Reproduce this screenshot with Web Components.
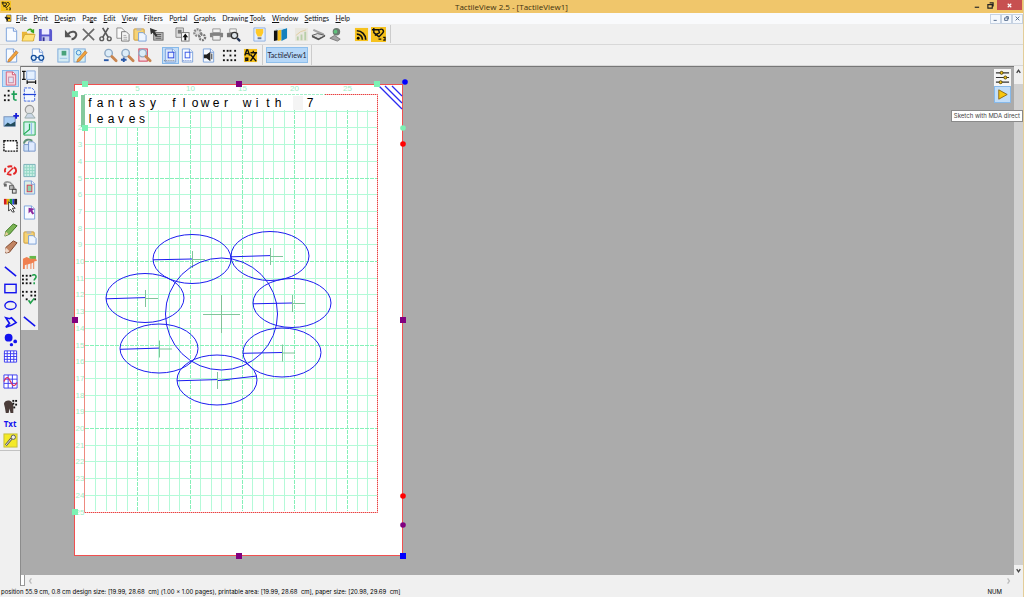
<!DOCTYPE html>
<html lang="en">
<head>
<meta charset="utf-8">
<title>TactileView 2.5 - [TactileView1]</title>
<style>
html, body { height: 100%; margin: 0; }
body { font: 7px/11px Lato, "Open Sans", sans-serif; color: #111; background: #f0f0f0; overflow: hidden; }
</style>
</head>
<body>
<tv-app></tv-app>
<script>
const page = (x = '', c = '#f8fbff') => `<path d="M2.500 1h7.500l3.500 3v11h-11z" fill="${c}" stroke="#7ba2dc"/><path d="M10 1v3.500h3.500" fill="#fff" stroke="#6f96d6"/>${x}`;
const dots = (list, s = 2, c = '#111') => list.map(([x, y]) => `<rect x="${x}" y="${y}" width="${s}" height="${s}" fill="${c}"/>`).join('');
const lens = x => `<circle cx="6" cy="5.500" r="4" fill="#dcecf8" stroke="#8fa9c4" stroke-width="1.500"/><path d="M9.500 9l4.500 4.500" stroke="#c9854f" stroke-width="3" stroke-linecap="round"/>${x}`;
const pencil = '<path d="M5 12l8-9 2 2-8 9-3 1z" fill="#f0a33c" stroke="#b8702a" stroke-width=".7"/>';
const ICONS = {
  app: '<rect width="16" height="16" fill="#f6c21d"/><path d="M1 3h7l1 3-5 3M9 3c3-2 6 1 3 4l-4 4M3 1v5l5 4" fill="none" stroke="#111" stroke-width="1.500"/><path d="M8 13h3m2-2h2v3h-2" stroke="#111" stroke-width="1.300" fill="none"/>',
  mdi: '<path d="M5 1h9v13H5z" fill="#f6c21d" stroke="#333"/><path d="M1 5l5-1 3 4-4 3zM6 6h6v3H8v4H6" fill="#222"/>',
  file: page(),
  open: '<path d="M1 5h5l1 2h7v8H1z" fill="#e9b63a"/><path d="M1 15l3-7h11l-2 7z" fill="#ffe27a" stroke="#c99a26" stroke-width=".7"/><path d="M6 5c1-4 5-4 6-2l2-1v5l-4-2 1-1c-1-1-3-1-5 1z" fill="#3aa51f"/>',
  save: '<path d="M1 2h13l1 2v11H1z" fill="#5a58cf"/><rect x="4" y="2" width="8" height="6" fill="#eef"/><rect x="4" y="10" width="8" height="5" fill="#c9cdf0"/><rect x="5" y="11" width="2" height="4" fill="#33318c"/>',
  undo: '<path d="M4 8c4-5 10-3 9 1-1 3-3 4-5 4" fill="none" stroke="#555" stroke-width="2.200"/><path d="M1 3v8h7z" fill="#555"/>',
  del: '<path d="M2 2l12 12M14 2L2 14" stroke="#6a6a6a" stroke-width="1.700"/>',
  cut: '<path d="M5 1l6 10M11 1L5 11" stroke="#5a5a5a" stroke-width="1.800"/><circle cx="4" cy="12.500" r="2" fill="none" stroke="#5a5a5a" stroke-width="1.500"/><circle cx="12" cy="12.500" r="2" fill="none" stroke="#5a5a5a" stroke-width="1.500"/>',
  copy: '<path d="M2 1h5l3 3v8H2z" fill="#fafafa" stroke="#8a8a8a"/><path d="M7 5h5l3 3v7H7z" fill="#f4f4f4" stroke="#777"/><path d="M9 9h3m-3 2h4m-4 2h4" stroke="#aaa"/>',
  paste: '<rect x="2" y="2" width="11" height="12" rx="1" fill="#f6d375" stroke="#c9993a"/><rect x="5" y="1" width="5" height="3" fill="#bbb"/><path d="M7 6h5l3 3v6H7z" fill="#eef5ff" stroke="#7aa0d8"/>',
  select: '<rect x="5" y="6" width="10" height="8" fill="#bbb" stroke="#666"/><path d="M7 8h6m-6 2h6m-6 2h6" stroke="#555"/><path d="M1 1l8 3-3 1 3 4-2 1-3-4-2 2z" fill="#333"/>',
  tocopy: '<path d="M1 1h8v10H1z" fill="#ddd" stroke="#888"/><path d="M3 3h4v4H3z" fill="#777"/><rect x="7" y="6" width="8" height="9" fill="#fff" stroke="#777"/><path d="M11 7l3 4h-2v3h-2v-3H8z" fill="#111"/>',
  gears: '<circle cx="6" cy="6" r="3.500" fill="#ddd" stroke="#888" stroke-width="2.500" stroke-dasharray="2 1"/><circle cx="11" cy="11" r="3" fill="#eee" stroke="#777" stroke-width="2.500" stroke-dasharray="2 1"/>',
  print: '<path d="M4 2h8v4H4z" fill="#f2f2f2" stroke="#999"/><rect x="1" y="6" width="14" height="5" rx="1" fill="#828282"/><path d="M4 9h8v5H4z" fill="#eee" stroke="#888"/>',
  preview: '<path d="M4 2h7v4H4z" fill="#f2f2f2" stroke="#999"/><rect x="1" y="6" width="12" height="5" rx="1" fill="#777"/><circle cx="9" cy="9" r="3.300" fill="#dde4ea" stroke="#333" stroke-width="1.300"/><path d="M12 12l3 3" stroke="#235" stroke-width="2.500"/>',
  bulb: '<path d="M2 1h12v14H2z" fill="#e4eeff" stroke="#8fb0e0"/><path d="M4 2h8v4l-2 4H6L4 6z" fill="#ffc928"/><rect x="6" y="11" width="4" height="2" fill="#6a7890"/>',
  books: '<path d="M1 4l4-2v12l-4 1z" fill="#111"/><path d="M5 4l4-2v12l-4 1z" fill="#f4bd1c"/><path d="M9 3l6-2v11l-6 3z" fill="#1681bd"/><path d="M1 4l5-3h9l-6 2" fill="#dbe9f0"/>',
  chart: '<rect x="1" y="1" width="14" height="14" fill="#e9e7df"/><path d="M3 14v-4h2v4m2 0V8h2v6m2 0V5h2v9" fill="#b9cfa8"/><path d="M2 9l5-4 6-2" stroke="#e0cda0" fill="none"/>',
  scan: '<path d="M3 2l11 5-1 2L2 4z" fill="#a5a5a5"/><path d="M1 9l6-2 8 2-7 4z" fill="#ddd" stroke="#555"/><path d="M1 11l7 3 7-4v-1l-7 3-7-3z" fill="#555"/>',
  camera: '<circle cx="9" cy="5" r="4" fill="#6b7a70"/><circle cx="8" cy="5" r="2" fill="#5fc27b"/><path d="M2 12l5-3 6 4-3 2z" fill="#a5a5a5" stroke="#777"/>',
  rss: '<rect x="1" y="1" width="14" height="14" fill="#f6c21d"/><circle cx="4.500" cy="12" r="1.500"/><path d="M3 7.500a6 6 0 0 1 6 6M3 4a9.500 9.500 0 0 1 9.500 9.500" fill="none" stroke="#111" stroke-width="1.800"/>',
  edit: page() + pencil,
  glasses: page() + '<circle cx="4" cy="10.500" r="2.600" fill="#d8ecff" stroke="#174f9c" stroke-width="1.400"/><circle cx="12" cy="10.500" r="2.600" fill="#d8ecff" stroke="#174f9c" stroke-width="1.400"/><path d="M6 10h4" stroke="#174f9c"/>',
  layout: '<rect x="2" y="1" width="12" height="14" fill="#d6ecf4" stroke="#7aa8da"/><rect x="6" y="3" width="5" height="5" fill="#49a37a"/><path d="M4 11h8" stroke="#9bc4e4"/>',
  layoutedit: '<rect x="1" y="1" width="12" height="14" fill="#d6f0f4" stroke="#7aa8da"/><circle cx="6" cy="5" r="2.500" fill="none" stroke="#3a87d0"/>' + pencil,
  zoomout: lens('<path d="M1 13h5" stroke="#2757a8" stroke-width="2"/>'),
  zoomin: lens('<path d="M1 12.500h6M4 10v5" stroke="#2757a8" stroke-width="2"/>'),
  zoompage: '<rect x="2" y="1" width="9" height="13" fill="#f2dce4" stroke="#d23852"/>' + lens(''),
  fit: page('<rect x="5.500" y="4.500" width="6" height="6" fill="#e6eeff" stroke="#2b49e0"/><path d="M1 13.500h12" stroke="#777" stroke-dasharray="1 1"/>', '#dbe8fb'),
  fit2: page('<rect x="5.500" y="4.500" width="5" height="6" fill="none" stroke="#3a59e8"/><path d="M3 13.500h10" stroke="#57c" stroke-dasharray="1 1"/>'),
  sound: page('<path d="M3 7h3l4-3v10l-4-3H3z" fill="#222"/><path d="M11.500 6v6" stroke="#222"/>'),
  braille: dots([[1,2],[1,7],[1,12],[5,2],[8,2],[13,2],[8,7],[13,7],[5,12],[13,12],[9,12]]),
  translate: '<rect x="1" y="1" width="14" height="14" fill="#f6c21d"/><path d="M2 8l2-6h1l2 6M3 6h4M8 5h7M11 3v2m3 0l-6 9m0-7l6 7M3 10v4m0-3h2v2H3" fill="none" stroke="#111" stroke-width="1.500"/>',
  redpage: '<path d="M3.500 1h7l3 3v11h-10z" fill="#f9d9df" stroke="#d9617a"/><path d="M10 1v3h3" fill="#fff" stroke="#c9506e"/><rect x="6" y="6.500" width="5" height="6" fill="#dfe6f7" stroke="#c58ba4"/>',
  dott: dots([[5,2],[1,7],[5,7],[1,12],[5,12]]) + '<path d="M11.500 3v8c0 2 1 2 3 2M9 6.500h6" fill="none" stroke="#1fa05a" stroke-width="1.800"/>',
  image: '<rect x="1" y="4" width="12" height="10" fill="#a8cdf4" stroke="#7791ba"/><path d="M1 14l4-4 3 2 5-3v5z" fill="#234c5c"/><path d="M14 0v6M11 3h6" stroke="#1820d8" stroke-width="2"/>',
  marquee: '<rect x="1" y="3" width="14" height="11" fill="#fff" stroke="#111" stroke-width="1.500" stroke-dasharray="2 1"/>',
  brokencircle: '<ellipse cx="8" cy="8" rx="6" ry="4.500" fill="none" stroke="#e32525" stroke-width="2" stroke-dasharray="5 2"/><path d="M5 11l6-6" stroke="#e32525" stroke-width="1.500"/>',
  phone: '<path d="M1 5c1-4 6-4 9 0l3 5" fill="none" stroke="#999" stroke-width="1.800"/><rect x="1" y="4" width="3" height="3" fill="#666"/><rect x="7" y="6" width="4" height="4" fill="#bbb" stroke="#666"/><rect x="10" y="10" width="4" height="4" fill="#ddd" stroke="#444"/>',
  palette: '<path d="M1 2h3v6H1z" fill="#d21d1d"/><path d="M4 2h3v6H4z" fill="#e6b000"/><path d="M7 2h3v6H7z" fill="#1a9c33"/><path d="M10 2h2v6h-2z" fill="#2440d8"/><path d="M12 2h3v6h-3z" fill="#222"/><path d="M6 5l7 7-3 0 2 4-2 0-2-3-2 2z" fill="#fff" stroke="#333"/>',
  pencilg: '<path d="M3 10l8-8 4 2-8 9-5 2z" fill="#7cb455" stroke="#39731f"/><path d="M3 10l3 3-4 2z" fill="#e9cf9c"/>',
  eraser: '<path d="M3 9l8-7 4 2-8 10-4 1z" fill="#c28563" stroke="#7d452b"/><path d="M3 9l4 4-3 2-2-2z" fill="#efd7c9"/>',
  line: '<path d="M2 3l12 10" stroke="#1313ee" stroke-width="1.700"/>',
  rect: '<rect x="2" y="3.500" width="12" height="9" fill="none" stroke="#1313ee" stroke-width="1.500"/>',
  ellipse: '<ellipse cx="8" cy="8" rx="6" ry="4.200" fill="none" stroke="#1313ee" stroke-width="1.500"/>',
  poly: '<path d="M3 3l4 1 2-1 5 5-5 3-6 2 4-4z" fill="none" stroke="#1313ee" stroke-width="1.700"/>',
  points: '<circle cx="6" cy="6" r="4.200" fill="#1313ee"/><circle cx="13" cy="10" r="2" fill="#1313ee"/><circle cx="9" cy="13.500" r="1.800" fill="#1313ee"/>',
  table: '<path d="M1.500 2h13v12h-13zM1 5h14M1 8h14M1 11h14M4.500 2v12M8 2v12M11.500 2v12" fill="#fff" stroke="#3a3af0"/>',
  graph: '<path d="M1 1h14v14H1zM1 5.500h14M1 10h14M5.500 1v14M10 1v14" fill="#fff" stroke="#3a3af0"/><path d="M1 8c3-7 5-4 7 0s4 7 7 1" fill="none" stroke="#e03060" stroke-width="1.400"/>',
  elephant: '<path d="M1 5c1-4 6-4 8-2l2 3v9H8l-1-5-1 5H3l-1-6z" fill="#4a3c39"/>' + dots([[10,1],[13,1],[10,4],[13,5],[11,8]]),
  knife: '<rect x="1" y="1" width="14" height="14" fill="#f4ea28" stroke="#c5bd3a"/><path d="M3 13l6-7" stroke="#555" stroke-width="2.500"/><path d="M3 13l6-7" stroke="#eee"/><circle cx="11" cy="4.500" r="2.300" fill="#eee" stroke="#555"/>',
  size: '<path d="M5 1h9v9H5z" fill="#e4f0ff" stroke="#86a8dc"/><path d="M2 1v9M0 1.500h4M0 10h4M5 13h10M5.500 11v4M14.500 11v4" stroke="#111" stroke-width="1.300"/>',
  split: '<path d="M2.500 1h8l3 3v11h-11z" fill="#f2f7ff" stroke="#3c63dd" stroke-dasharray="3 1"/><path d="M1 8h14" stroke="#2343d8" stroke-width="1.300"/>',
  head: '<circle cx="8" cy="6" r="4.500" fill="#e2e2e2" stroke="#9b9b9b" stroke-width="1.300"/><path d="M3 15l3-5h4l4 5z" fill="#cbd7e6" stroke="#9aa"/>',
  greenpg: '<path d="M2 1h12v14H2z" fill="#d4f2ef" stroke="#23ab54"/><path d="M2 14l6-5V3" fill="none" stroke="#23ab54" stroke-width="1.300"/><path d="M10 2v12" stroke="#8bb5ee"/>',
  swap: '<path d="M2 7h6v7H2z" fill="#cde0f8" stroke="#7594c8"/><path d="M7 4h5l2 2v8H7z" fill="#dfeaff" stroke="#7594c8"/><path d="M2 6c1-5 6-5 9-3" fill="none" stroke="#5d9078" stroke-width="2"/>',
  grid: '<path d="M2 1.500h12v13H2z" fill="#c9efe5" stroke="#78afb8"/><path d="M5 2v12M8 2v12M11 2v12M2 5h12M2 8h12M2 11h12" stroke="#93d6c4"/>',
  gpage: page('<rect x="5.500" y="5.500" width="5" height="7" fill="#8fd2ae" stroke="#d63c55"/>', '#dcefe4'),
  tagpage: page('<path d="M7 3l6 1-2 2 2 3-2 1-2-3-2 2z" fill="#8c2a9e"/>'),
  horse: '<path d="M1 4l4-2 4 2 5-2 2 4-3 1v8h-1V8l-2 1v6H9V9l-3 1v5H5v-5l-2 1v4H1z" fill="#f08050"/><path d="M8 1h7v3H8z" fill="#66b84c"/>',
  bq: dots([[0,3],[4,3],[8,3],[0,7],[4,7],[0,11],[4,11],[8,11]]) + '<path d="M11 4c1-2 4-1 4 1s-2 2-2 4m0 2v2" fill="none" stroke="#22a14c" stroke-width="1.700"/>',
  bcheck: dots([[0,2],[4,2],[9,2],[13,2],[0,6],[9,6],[13,6],[4,10],[13,10]]) + '<path d="M7 12l2 3 4-5" fill="none" stroke="#22a14c" stroke-width="1.700"/>',
  sliders: '<path d="M1 3h14M1 8h14M1 13h14" stroke="#333" stroke-width="1.300"/><g fill="#f4c316" stroke="#54450a"><circle cx="7" cy="3" r="1.600"/><circle cx="11" cy="8" r="1.600"/><circle cx="6" cy="13" r="1.600"/></g>',
  play: '<path d="M4 3l9 5-9 5z" fill="#f9c70e" stroke="#8d6a18"/>',
};
const svg = n => `<svg viewBox="0 0 16 16" aria-hidden="true">${ICONS[n]}</svg>`;
const define = (name, render) => customElements.define(name, class extends HTMLElement {
  connectedCallback() {
    if (!this.shadowRoot) this.attachShadow({ mode: 'open' }).innerHTML = render(this);
  }
});

define('tv-tool', el => `<style>
:host { display: block; flex: none; width: 17px; height: 17px; }
button { display: grid; place-items: center; box-sizing: border-box; width: 100%; height: 100%; padding: 0; border: 0; background: none; color: #1313ee; font: bold 8px/11px "Open Sans", sans-serif; }
button:hover, :host([active]) button { background: #c3def8; box-shadow: inset 0 0 0 1px #86b9ea; }
svg { display: block; width: 15px; height: 15px; overflow: visible; }
</style><button type="button" aria-label="${el.getAttribute('label') || el.getAttribute('icon')}">${el.hasAttribute('icon') ? svg(el.getAttribute('icon')) : '<slot></slot>'}</button>`);

// "a b | c" : tools a and b, a group gap, tool c. "," is a narrow gap; "*" marks an active tool.
const tools = spec => spec.split(' ').map(t =>
  t === '|' ? '<i class="gap"></i>' : t === ',' ? '<i class="gap small"></i>' :
  t === 'Txt' ? '<tv-tool label="Text">Txt</tv-tool>' :
  `<tv-tool icon="${t.replace('*', '')}"${t.endsWith('*') ? ' active' : ''}></tv-tool>`).join('');

define('tv-toolbar', el => `<style>
:host { display: flex; align-items: center; box-sizing: border-box; height: 21px; padding-left: 3px; border-bottom: 1px solid #d8d8d8; background: #f0f0f0; }
.gap { flex: none; width: 9px; } .small { width: 4px; }
</style>${tools(el.getAttribute('tools'))}<slot></slot>`);

define('tv-strip', el => `<style>
:host { display: flex; flex-direction: column; align-items: center; align-self: flex-start; box-sizing: border-box; background: #f0f0f0; }
.gap { flex: none; height: 8px; }
</style>${tools(el.getAttribute('tools'))}`);

define('tv-titlebar', () => `<style>
:host { display: grid; grid-template-columns: 1fr auto 1fr; height: 13px; background: #f0c66b; }
svg { width: 10px; height: 10px; margin: 1px; }
h1 { margin: 0; font: 8px/13px "Open Sans", sans-serif; color: #3d3010; }
div { display: flex; justify-content: flex-end; }
button { width: 14px; height: 10px; padding: 0; border: 0; background: none; display: grid; place-items: center; }
button svg { width: 7px; height: 7px; margin: 0; fill: none; stroke: #222; stroke-width: 1.300; }
.close { width: 25px; background: #c75050; margin-right: 1px; } .close svg { stroke: #fff; }
</style><span>${svg('app')}</span><h1>TactileView 2.5 - [TactileView1]</h1>
<div><button aria-label="Minimize"><svg viewBox="0 0 8 8"><path d="M2 6h5"/></svg></button>
<button aria-label="Restore"><svg viewBox="0 0 8 8"><path d="M1 3h5v4H1zM3 1h4v4"/></svg></button>
<button class="close" aria-label="Close"><svg viewBox="0 0 8 8"><path d="M2 2l4 4M6 2L2 6"/></svg></button></div>`);

define('tv-menubar', () => `<style>
:host { display: flex; align-items: center; height: 11px; padding-left: 4px; background: #f9fafc; }
svg { width: 8px; height: 9px; display: block; }
nav { display: flex; justify-content: space-between; width: 334px; margin: 0 auto 0 4px; }
a { color: #111; text-decoration: none; white-space: nowrap; }
u { text-underline-offset: 1px; text-decoration-thickness: 1px; }
button { width: 11px; height: 10px; padding: 0; border: 1px solid #c6d2e2; background: #f4f8fd; display: grid; place-items: center; }
button svg { width: 5px; height: 5px; fill: none; stroke: #51678a; stroke-width: 1.500; }
</style>${svg('mdi')}<nav>${['_File','_Print','_Design','Pa_ge','_Edit','_View','F_ilters','P_ortal','_Graphs','Drawing _Tools','_Window','_Settings','_Help'].map(t => `<a href="#">${t.replace(/_(.)/, '<u>$1</u>')}</a>`).join('')}</nav>
<button aria-label="Minimize document"><svg viewBox="0 0 8 8"><path d="M1 7h5"/></svg></button><button aria-label="Restore document"><svg viewBox="0 0 8 8"><path d="M1 3h5v4H1zM3 1h4v4"/></svg></button><button aria-label="Close document"><svg viewBox="0 0 8 8"><path d="M1 1l6 6M7 1L1 7"/></svg></button>`);

// The tactile sheet: paper outline, centimetre grid, braille text and drawing.
define('tv-sheet', () => {
  const CX = 10.46, CY = 16.7, X0 = 15, Y0 = 15, X1 = 307, Y1 = 432;
  let grid = '', labels = '';
  for (let i = 1; i < 28; i++) {
    const x = Math.round(X0 + i * CX) + .5;
    grid += `<path class="${i % 5 ? 'g' : 'm'}" d="M${x} ${i < 6 ? 48 : 31}V${Y1}"/>`;
    if (i % 5 === 0) labels += `<text x="${x}" y="12">${i}</text>`;
  }
  for (let j = 1; j < 25; j++) {
    const y = Math.round(Y0 + j * CY) + .5;
    grid += `<path class="${j % 5 ? 'g' : 'm'}" d="M${j < 2 ? 76 : X0} ${y}H${X1}"/>`;
  }
  for (let j = 2; j <= 25; j++) labels += `<text x="10" y="${Math.round(Y0 + j * CY) + 3}">${j}</text>`;
  const cells = (s, y) => `<text class="b" y="${y}" x="${[...s].map((c, i) => Math.round(20 + i * CX)).join(' ')}">${s}</text>`;
  const petals = [[122,180,39,24.5,0],[200,177,39,24.5,-1],[222,224,39,24.5,0],[212,273.5,39,24.5,0],[147,301,40,25,-1],[89,269.500,39,24.5,-1],[75,219,39,24.5,-1]];
  const shapes = petals.map(([x, y, rx, ry, d]) => `<ellipse cx="${x}" cy="${y}" rx="${rx}" ry="${ry}"/><path d="M${x - rx} ${y + .8}L${x} ${y + d * .4}"/><path class="c" d="M${x} ${y + .5}h13M${x + .5} ${y - 8}v17"/>`).join('');
  const sq = (x, y, c) => `<rect x="${x - 3}" y="${y - 3}" width="6" height="6" fill="${c}"/>`;
  const dot = (x, y, c) => `<circle cx="${x}" cy="${y}" r="2.800" fill="${c}"/>`;
  return `<style>
:host { display: block; margin: 12px 0 0 32px; }
svg { display: block; overflow: visible; font: 8px "Liberation Sans", sans-serif; }
text { text-anchor: middle; fill: #a0eec6; } .b { font-size: 12px; fill: #000; white-space: pre; }
path { fill: none; } .g { stroke: #b4fad8; } .m { stroke: #86f0b8; stroke-dasharray: 4 1; }
.s { fill: none; stroke: #1c1cf0; stroke-width: 1; } .c { stroke: #80c49a; stroke-width: 1; }
</style><svg width="333" height="478" role="img" aria-label="Fantasy flower with 7 leaves">
<rect x="4.500" y="5.500" width="328" height="471" fill="#fff" stroke="#f05050"/>
${grid}${labels}
<path d="M255 15.500H307.500V433.500H14.500" stroke="#f7b4b4"/><path d="M255 15.500H307.500V433.500H14.500" stroke="#e84040" stroke-dasharray="1 1"/><path d="M14.500 48V433.500" stroke="#ee8a80"/>
<path d="M14 15.500H255" stroke="#a2efc8" stroke-dasharray="3 1"/>
<path d="M13 16V48" stroke="#84c99d" stroke-width="4"/><rect x="223" y="17" width="10" height="14" fill="#f4f4f4"/>
${cells('fantasy flower with  7', 28)}${cells('leaves', 44)}
<g class="s">${shapes}<circle cx="151.500" cy="235" r="56"/><path d="M148 301.500L187 297"/><path class="c" d="M133 235.500h37M151.500 216v38"/></g>
<path d="M309 7l23 23M315 7l17 17M322 7l10 10" stroke="#2a2af0" stroke-width="1.300"/>
${sq(15, 5, '#7cf2b4')}${sq(5, 15, '#7cf2b4')}${sq(15, 49, '#7cf2b4')}${sq(307, 5, '#7cf2b4')}${sq(5, 433, '#7cf2b4')}
${sq(169, 5, '#800080')}${sq(5, 241, '#800080')}${sq(333, 241, '#800080')}${sq(169, 477, '#800080')}${sq(333, 477, '#00f')}
${dot(335, 3, '#00f')}${dot(333, 49, '#7cf2b4')}${dot(333, 65, '#f00')}${dot(333, 417, '#f00')}${dot(333, 446, '#800080')}
</svg>`;
});

define('tv-scroll', el => `<style>
:host { display: flex; align-items: center; justify-content: space-between; background: #f0f0f0; }
:host([vertical]) { flex-direction: column; width: 9px; }
:host(:not([vertical])) { height: 11px; padding: 0 10px 0 1px; }
svg { flex: none; width: 9px; height: 10px; fill: none; stroke: ${el.hasAttribute('vertical') ? '#444' : '#bbb'}; stroke-width: 1.500; }
.thumb { display: none; } :host([vertical]) .thumb { display: block; flex: 1; width: 100%; margin: 8px 0 0; background: #d0d0d0; }
</style>${el.hasAttribute('vertical')
  ? '<svg viewBox="0 0 10 10"><path d="M3 7l2-3 2 3"/></svg><div class="thumb"></div><svg viewBox="0 0 10 10"><path d="M3 4l2 3 2-3"/></svg>'
  : '<svg viewBox="0 0 10 10"><path d="M6 2L4 5l2 3"/></svg><svg viewBox="0 0 10 10"><path d="M4 2l2 3-2 3"/></svg>'}`);

define('tv-mda', () => `<style>
:host { position: absolute; top: 2px; right: 3px; display: flex; flex-direction: column; align-items: center; width: 17px; background: #f5f5f5; }
[role=tooltip] { position: absolute; top: 41px; right: -12px; padding: 0 2px; border: 1px solid #8a8a8a; background: #fff; color: #444; white-space: nowrap; font: 6px/10px Inter, sans-serif; z-index: 1; }
</style><tv-tool icon="sliders"></tv-tool><tv-tool icon="play" active></tv-tool><span role="tooltip">Sketch with MDA direct</span>`);

define('tv-status', () => `<style>
:host { display: flex; justify-content: space-between; height: 11px; padding: 0 21px 0 1px; background: #f0f0f0; white-space: pre; color: #000; font: 6px/11px Inter, sans-serif; }
</style><span>position 55.9 cm, 0.8 cm design size: [19.99, 28.68  cm] (1.00 x 1.00 pages), printable area: [19.99, 28.68  cm], paper size: [20.98, 29.69  cm]</span><span>NUM</span>`);

define('tv-app', () => `<style>
:host { display: flex; flex-direction: column; box-sizing: border-box; height: 100vh; border-right: 1px solid #e3cd98; }
.main { flex: 1; min-height: 0; display: flex; }
.left { flex: none; width: 20px; border-right: 1px solid #8c8c8c; }
.left tv-strip { padding: 4px 0 1px; border-bottom: 1px solid #c2c2c2; }
.body { flex: 1; min-width: 0; display: flex; flex-direction: column; }
.view { flex: 1; min-height: 0; display: flex; }
.desk { position: relative; flex: 1; min-width: 0; display: flex; overflow: visible; background: #ababab; border-top: 1px solid #777; }
.desk > tv-strip { width: 17px; padding: 2px 0 0; }
.doc { display: flex; align-items: center; align-self: stretch; margin-left: 3px; padding: 0 3px; border: solid #ccc; border-width: 0 1px; }
.doc button { width: 42px; height: 16px; padding: 0; border: 1px solid #8ebfec; background: #b5d7f8; font: 7px/11px Lato, sans-serif; color: #223; }
.bar { display: flex; }.split { width: 3px; border: solid #999; border-width: 0 1px 1px 0; background: #fff; }
.bar tv-scroll { flex: 1; }
.end { width: 3px; height: 18px; border-right: 1px solid #ccc; }
</style>
<tv-titlebar></tv-titlebar><tv-menubar></tv-menubar>
<tv-toolbar tools="file open save | undo del cut copy paste select | tocopy gears print preview | bulb , books , chart scan camera | rss app"><span class="end"></span></tv-toolbar>
<tv-toolbar tools="edit | glasses | layout layoutedit | , zoomout zoomin zoompage | fit* fit2 , sound , braille , translate"><span class="doc"><button type="button">TactileView1</button></span></tv-toolbar>
<div class="main">
<div class="left"><tv-strip tools="redpage* dott | image | marquee | brokencircle phone palette | pencilg eraser | line rect ellipse poly points table | graph | elephant Txt knife"></tv-strip></div>
<div class="body"><div class="view"><div class="desk">
<tv-strip tools="size split head greenpg swap | grid gpage | tagpage | paste | horse bq bcheck | line"></tv-strip>
<tv-sheet></tv-sheet><tv-mda></tv-mda></div><tv-scroll vertical></tv-scroll></div>
<div class="bar"><div class="split"></div><tv-scroll></tv-scroll></div></div></div>
<tv-status></tv-status>`);
</script>
</body>
</html>
